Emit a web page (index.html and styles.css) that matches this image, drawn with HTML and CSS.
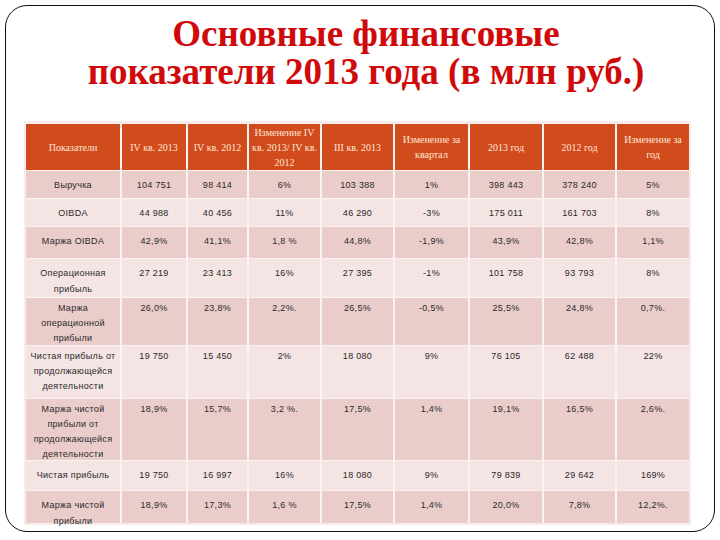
FILE: index.html
```html
<!DOCTYPE html>
<html lang="ru">
<head>
<meta charset="utf-8">
<title>Основные финансовые показатели 2013 года</title>
<link rel="stylesheet" href="styles.css">
</head>
<body>
<div class="frame">
  <h1 class="title">Основные финансовые<br>показатели 2013 года (в млн руб.)</h1>
  <div class="table-wrap">
    <div class="grid">
      <div class="th">Показатели</div>
      <div class="th">IV кв. 2013</div>
      <div class="th">IV кв. 2012</div>
      <div class="th">Изменение IV кв. 2013/ IV кв. 2012</div>
      <div class="th">III кв. 2013</div>
      <div class="th">Изменение за квартал</div>
      <div class="th">2013 год</div>
      <div class="th">2012 год</div>
      <div class="th">Изменение за год</div>

      <div class="td dark">Выручка</div><div class="td dark">104 751</div><div class="td dark">98 414</div><div class="td dark">6%</div><div class="td dark">103 388</div><div class="td dark">1%</div><div class="td dark">398 443</div><div class="td dark">378 240</div><div class="td dark">5%</div>

      <div class="td light">OIBDA</div><div class="td light">44 988</div><div class="td light">40 456</div><div class="td light">11%</div><div class="td light">46 290</div><div class="td light">-3%</div><div class="td light">175 011</div><div class="td light">161 703</div><div class="td light">8%</div>

      <div class="td dark">Маржа OIBDA</div><div class="td dark">42,9%</div><div class="td dark">41,1%</div><div class="td dark">1,8 %</div><div class="td dark">44,8%</div><div class="td dark">-1,9%</div><div class="td dark">43,9%</div><div class="td dark">42,8%</div><div class="td dark">1,1%</div>

      <div class="td light">Операционная прибыль</div><div class="td light">27 219</div><div class="td light">23 413</div><div class="td light">16%</div><div class="td light">27 395</div><div class="td light">-1%</div><div class="td light">101 758</div><div class="td light">93 793</div><div class="td light">8%</div>

      <div class="td dark tight">Маржа операционной прибыли</div><div class="td dark tight">26,0%</div><div class="td dark tight">23,8%</div><div class="td dark tight">2,2%.</div><div class="td dark tight">26,5%</div><div class="td dark tight">-0,5%</div><div class="td dark tight">25,5%</div><div class="td dark tight">24,8%</div><div class="td dark tight">0,7%.</div>

      <div class="td light tight">Чистая прибыль от продолжающейся деятельности</div><div class="td light tight">19 750</div><div class="td light tight">15 450</div><div class="td light tight">2%</div><div class="td light tight">18 080</div><div class="td light tight">9%</div><div class="td light tight">76 105</div><div class="td light tight">62 488</div><div class="td light tight">22%</div>

      <div class="td dark tight">Маржа чистой прибыли от продолжающейся деятельности</div><div class="td dark tight">18,9%</div><div class="td dark tight">15,7%</div><div class="td dark tight">3,2 %.</div><div class="td dark tight">17,5%</div><div class="td dark tight">1,4%</div><div class="td dark tight">19,1%</div><div class="td dark tight">16,5%</div><div class="td dark tight">2,6%.</div>

      <div class="td light">Чистая прибыль</div><div class="td light">19 750</div><div class="td light">16 997</div><div class="td light">16%</div><div class="td light">18 080</div><div class="td light">9%</div><div class="td light">79 839</div><div class="td light">29 642</div><div class="td light">169%</div>

      <div class="td dark">Маржа чистой прибыли</div><div class="td dark">18,9%</div><div class="td dark">17,3%</div><div class="td dark">1,6 %</div><div class="td dark">17,5%</div><div class="td dark">1,4%</div><div class="td dark">20,0%</div><div class="td dark">7,8%</div><div class="td dark">12,2%.</div>
    </div>
  </div>
</div>
</body>
</html>
```
FILE: styles.css
```css
html, body {
  margin: 0;
  padding: 0;
  background: #ffffff;
}

.frame {
  box-sizing: border-box;
  width: 710px;
  height: 527px;
  margin: 5px 0 0 5px;
  border: 1.5px solid #111;
  border-radius: 22px;
  display: flex;
  flex-direction: column;
}

.title {
  margin: 9px 0 0 12px;
  height: 106px;
  font-family: "Liberation Serif", "Times New Roman", serif;
  font-weight: bold;
  font-size: 37px;
  line-height: 38px;
  color: #d00a0a;
  text-align: center;
}

.table-wrap {
  margin: 0 0 0 18px;
  padding: 3px 2px 2px 2px;
  background: #f8ece8;
  width: max-content;
}

.grid {
  display: grid;
  grid-template-columns: 94px 64px 59px 71px 71px 73px 72px 71px 72px;
  grid-template-rows: 46px 27px 27px 31px 38px 47px 52px 61px 29px 32px;
  column-gap: 2px;
  row-gap: 1px;
  background: #fbf3f1;
}

.th {
  background: #d24b1d;
  color: #fde6d6;
  font-family: "Liberation Serif", "Times New Roman", serif;
  font-size: 10px;
  line-height: 15px;
  text-align: center;
  display: flex;
  align-items: center;
  justify-content: center;
  padding: 0 3px;
}

.td {
  font-family: "Liberation Sans", Arial, sans-serif;
  font-size: 9px;
  letter-spacing: 0.3px;
  line-height: 16px;
  color: #2a2a2a;
  text-align: center;
  padding: 6px 3px 0 3px;
}

.tight {
  line-height: 15px;
  padding-top: 3px;
}

.dark {
  background: #eacdcb;
}

.light {
  background: #f4e4e4;
}
```
